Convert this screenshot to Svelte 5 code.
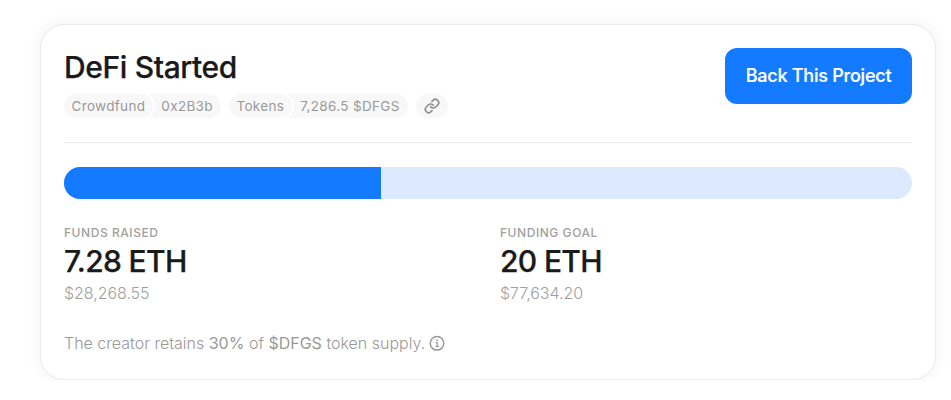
<script>
  let raised = $state(7.28)
  let goal = $state(20)

  const tags = [
    { label: 'Crowdfund', value: '0x2B3b' },
    { label: 'Tokens', value: '7,286.5 $DFGS' },
  ]

  const stats = $derived([
    { label: 'Funds Raised', amount: raised, usd: '$28,268.55' },
    { label: 'Funding Goal', amount: goal, usd: '$77,634.20' },
  ])

  // the fill stops a little past the exact ratio
  const FILL_OFFSET = 1.04
  const percent = $derived((raised / goal) * 100 + FILL_OFFSET)
</script>

<main class="card">
  <header class="card-header">
    <div class="heading">
      <h1>DeFi Started</h1>
      <div class="tags">
        {#each tags as tag}
          <div class="tag">
            <span class="tag-label">{tag.label}</span>
            <span class="tag-value">{tag.value}</span>
          </div>
        {/each}
        <button type="button" class="link-btn" aria-label="Copy link">
          <svg width="16" height="16" viewBox="0 0 24 24" fill="none" stroke="currentColor" stroke-width="2.4" stroke-linecap="round" stroke-linejoin="round">
            <path d="M10 13a5 5 0 0 0 7.54.54l3-3a5 5 0 0 0-7.07-7.07l-1.72 1.71" />
            <path d="M14 11a5 5 0 0 0-7.54-.54l-3 3a5 5 0 0 0 7.07 7.07l1.71-1.71" />
          </svg>
        </button>
      </div>
    </div>
    <button type="button" class="back-btn">Back This Project</button>
  </header>

  <div class="progress">
    <div class="progress-fill" style="width: {percent}%"></div>
  </div>

  <div class="stats">
    {#each stats as stat}
      <div class="stat">
        <span class="stat-label">{stat.label}</span>
        <span class="stat-amount">{stat.amount} ETH</span>
        <span class="stat-usd">{stat.usd}</span>
      </div>
    {/each}
  </div>

  <p class="note">
    <span>The creator retains <b>30%</b> of <b>$DFGS</b> token supply.</span>
    <svg width="16" height="16" viewBox="0 0 16 16" fill="none" stroke="currentColor">
      <circle cx="8" cy="8.3" r="6.8" stroke-width="1.5" />
      <path d="M6.6 7.6H8.2V11.3M6.5 11.5H9.9" stroke-width="1.2" />
      <circle cx="8" cy="5.2" r="0.9" fill="currentColor" stroke="none" />
    </svg>
  </p>
</main>

<style>
  :global(body) {
    background: #fff;
  }
  .card {
    box-sizing: border-box;
    width: 896px;
    height: 356px;
    margin: 24px 0 0 40px;
    padding: 23px;
    border: 1px solid #ebebeb;
    border-radius: 24px;
    box-shadow: 0 0 16px rgba(0, 0, 0, 0.06);
    background: #fff;
    color: #1a1a1a;
    font-family: Inter, sans-serif;
  }
  button {
    border: none;
    font-family: inherit;
    cursor: pointer;
  }
  .card-header {
    display: flex;
    justify-content: space-between;
    align-items: flex-start;
    height: 94px;
    border-bottom: 1px solid #ebebeb;
  }
  h1 {
    margin: 0;
    font-size: 30px;
    font-weight: 500;
    line-height: 38px;
    letter-spacing: -0.37px;
    -webkit-text-stroke: 0.25px currentColor;
  }
  .tags {
    display: flex;
    gap: 8px;
    margin-top: 8px;
  }
  .tag {
    display: flex;
    height: 24px;
    border-radius: 12px;
    background: #f8f8f8;
    color: #999;
    font-size: 13.5px;
    line-height: 24px;
    letter-spacing: 0.33px;
    overflow: hidden;
  }
  .tag-label {
    padding: 0 8px 0 7.5px;
    border-radius: 12px;
    box-shadow: 0 0 0 2px #fff;
  }
  .tag-value {
    padding: 0 8px;
  }
  .link-btn {
    display: flex;
    align-items: center;
    justify-content: center;
    width: 32px;
    height: 24px;
    padding: 0;
    border-radius: 12px;
    background: #f8f8f8;
    color: #8c8c8c;
  }
  .back-btn {
    width: 187px;
    height: 56px;
    padding: 0 0 1px;
    border-radius: 12px;
    background: #147aff;
    color: #fff;
    font-size: 18px;
    font-weight: 500;
    letter-spacing: -0.23px;
    -webkit-text-stroke: 0.2px currentColor;
  }
  .progress {
    height: 32px;
    margin-top: 24px;
    border-radius: 16px;
    background: #dbeafe;
    overflow: hidden;
  }
  .progress-fill {
    height: 100%;
    background: #147aff;
  }
  .stats {
    display: grid;
    grid-template-columns: 1fr 1fr;
    column-gap: 24px;
    margin-top: 24px;
  }
  .stat {
    display: flex;
    flex-direction: column;
  }
  .stat-label {
    color: #a0a0a0;
    font-size: 12px;
    font-weight: 500;
    line-height: 20px;
    letter-spacing: 0.55px;
    text-transform: uppercase;
  }
  .stat-amount {
    margin-top: -1px;
    font-size: 30px;
    font-weight: 500;
    line-height: 38px;
    letter-spacing: -0.65px;
    -webkit-text-stroke: 0.25px currentColor;
  }
  .stat-usd {
    margin-top: 1px;
    color: #a0a0a0;
    font-size: 16px;
    font-weight: 300;
    line-height: 24px;
    letter-spacing: -0.05px;
  }
  .note {
    display: flex;
    align-items: center;
    gap: 4px;
    margin: 26px 0 0;
    color: #999;
    font-size: 16px;
    font-weight: 300;
    line-height: 24px;
  }
  .note b {
    font-weight: 400;
  }
</style>
